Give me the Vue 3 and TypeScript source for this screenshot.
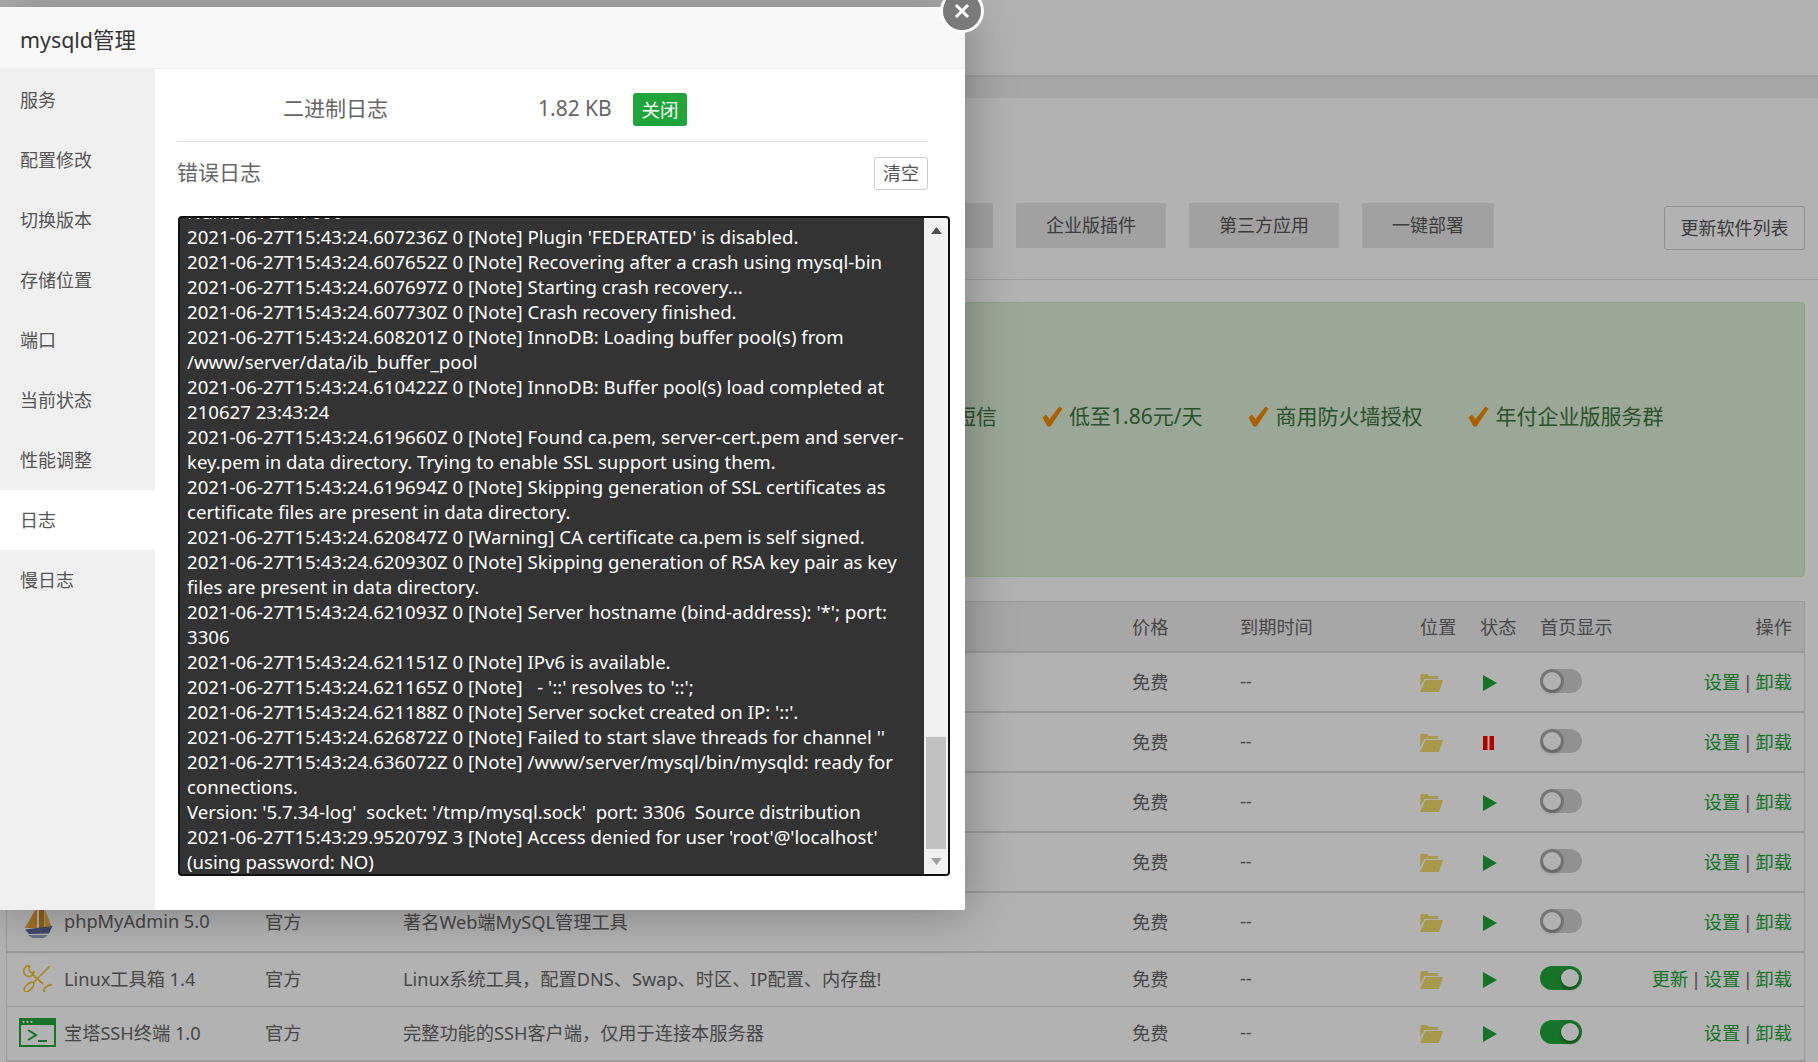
<script setup lang="ts">
interface Row {
  icon: string
  name: string
  type: string
  desc: string
  status: 'play' | 'pause'
  on: boolean
  update: boolean
  thin: boolean
}

const blank = { icon: '', name: '', type: '', desc: '', update: false, thin: false }
const rows: Row[] = [
  { ...blank, status: 'play', on: false },
  { ...blank, status: 'pause', on: false },
  { ...blank, status: 'play', on: false },
  { ...blank, status: 'play', on: false },
  { icon: 'boat', name: 'phpMyAdmin 5.0', type: '官方', desc: '著名Web端MySQL管理工具', status: 'play', on: false, update: false, thin: false },
  { icon: 'tools', name: 'Linux工具箱 1.4', type: '官方', desc: 'Linux系统工具，配置DNS、Swap、时区、IP配置、内存盘!', status: 'play', on: true, update: true, thin: true },
  { icon: 'ssh', name: '宝塔SSH终端 1.0', type: '官方', desc: '完整功能的SSH客户端，仅用于连接本服务器', status: 'play', on: true, update: false, thin: true }
]

const menu = ['服务', '配置修改', '切换版本', '存储位置', '端口', '当前状态', '性能调整', '日志', '慢日志']
const features = ['低至1.86元/天', '商用防火墙授权', '年付企业版服务群']

const logLines = [
  'Number: 2. 17000',
  "2021-06-27T15:43:24.607236Z 0 [Note] Plugin 'FEDERATED' is disabled.",
  '2021-06-27T15:43:24.607652Z 0 [Note] Recovering after a crash using mysql-bin',
  '2021-06-27T15:43:24.607697Z 0 [Note] Starting crash recovery...',
  '2021-06-27T15:43:24.607730Z 0 [Note] Crash recovery finished.',
  '2021-06-27T15:43:24.608201Z 0 [Note] InnoDB: Loading buffer pool(s) from',
  '/www/server/data/ib_buffer_pool',
  '2021-06-27T15:43:24.610422Z 0 [Note] InnoDB: Buffer pool(s) load completed at',
  '210627 23:43:24',
  '2021-06-27T15:43:24.619660Z 0 [Note] Found ca.pem, server-cert.pem and server-',
  'key.pem in data directory. Trying to enable SSL support using them.',
  '2021-06-27T15:43:24.619694Z 0 [Note] Skipping generation of SSL certificates as',
  'certificate files are present in data directory.',
  '2021-06-27T15:43:24.620847Z 0 [Warning] CA certificate ca.pem is self signed.',
  '2021-06-27T15:43:24.620930Z 0 [Note] Skipping generation of RSA key pair as key',
  'files are present in data directory.',
  "2021-06-27T15:43:24.621093Z 0 [Note] Server hostname (bind-address): '*'; port:",
  '3306',
  '2021-06-27T15:43:24.621151Z 0 [Note] IPv6 is available.',
  "2021-06-27T15:43:24.621165Z 0 [Note]   - '::' resolves to '::';",
  "2021-06-27T15:43:24.621188Z 0 [Note] Server socket created on IP: '::'.",
  "2021-06-27T15:43:24.626872Z 0 [Note] Failed to start slave threads for channel ''",
  '2021-06-27T15:43:24.636072Z 0 [Note] /www/server/mysql/bin/mysqld: ready for',
  'connections.',
  "Version: '5.7.34-log'  socket: '/tmp/mysql.sock'  port: 3306  Source distribution",
  "2021-06-27T15:43:29.952079Z 3 [Note] Access denied for user 'root'@'localhost'",
  '(using password: NO)'
]
</script>

<template>
  <div class="page">
    <div class="topbar"></div>
    <div class="panel">
      <div class="tabs">
        <div class="tab"></div>
        <div class="tab">企业版插件</div>
        <div class="tab">第三方应用</div>
        <div class="tab narrow">一键部署</div>
        <div class="update">更新软件列表</div>
      </div>
      <div class="rule"></div>
      <div class="promo">
        <span class="promo-lead">短信</span>
        <span v-for="f in features" :key="f" class="feature">
          <svg class="check" viewBox="0 0 21 21"><path d="M0.5 11.5 L4 8.5 L7.5 13 L17.5 0.5 L20.5 2.5 L8.5 20.5 L5.5 20.5 Z" /></svg>
          {{ f }}
        </span>
      </div>
      <div class="table">
        <div class="row head">
          <span></span><span></span><span></span><span></span>
          <span>价格</span><span>到期时间</span><span>位置</span><span>状态</span><span>首页显示</span>
          <span class="ops">操作</span>
        </div>
        <div v-for="(r, i) in rows" :key="i" class="row" :class="{ thin: r.thin }">
          <span class="icon-cell">
            <svg v-if="r.icon === 'boat'" class="boat" viewBox="0 0 28 33">
              <path d="M12 2 L12 23 L0 23 Z" fill="#eda32e" />
              <path d="M14 3 L14 23 L19 23 L19 2 Z" fill="#c98a2a" />
              <path d="M19.5 3 L27 23 L19.5 23 Z" fill="#f3b446" />
              <path d="M0 24.5 L27.5 21 L24 28.5 L4 29 Z" fill="#5d6596" />
              <path d="M3 30 H23 L19 33 H7 Z" fill="#9aa0c4" />
            </svg>
            <svg v-else-if="r.icon === 'tools'" class="tools" viewBox="0 0 29 27" fill="none" stroke="#f0c62e" stroke-width="1.7">
              <path d="M6.5 1 A5.2 5.2 0 1 0 11 7 L8 7.5 L6 5 Z" />
              <path d="M9 9 L20 19" />
              <path d="M27.5 19.5 A5.2 5.2 0 1 1 21 26 L21.5 23 L24.5 21 Z" />
              <path d="M27 1 L10 18" />
              <ellipse cx="6" cy="22" rx="6" ry="3" transform="rotate(-45 6 22)" />
            </svg>
            <svg v-else-if="r.icon === 'ssh'" class="ssh" viewBox="0 0 37 29">
              <rect x="1" y="1" width="35" height="27" fill="none" stroke="#20a53a" stroke-width="2" />
              <rect x="1" y="1" width="35" height="6" fill="#20a53a" />
              <circle cx="4.5" cy="3.8" r="1.1" fill="#fff" />
              <circle cx="8.5" cy="3.8" r="1.1" fill="#fff" />
              <circle cx="12.5" cy="3.8" r="1.1" fill="#fff" />
              <path d="M9 12 L17 17 L9 22" fill="none" stroke="#20a53a" stroke-width="2" />
              <path d="M19 23 H28" stroke="#20a53a" stroke-width="2" />
            </svg>
          </span>
          <span>{{ r.name }}</span>
          <span>{{ r.type }}</span>
          <span>{{ r.desc }}</span>
          <span>免费</span>
          <span>--</span>
          <span>
            <svg class="folder" viewBox="0 0 24 18">
              <path d="M1.5 1 Q1.5 0 2.5 0 H8 L10 2 H19 V5 H5.5 L1 13 Z" />
              <path d="M6.5 6 H24 L20 18 H1 Z" />
            </svg>
          </span>
          <span>
            <svg v-if="r.status === 'play'" class="play" viewBox="0 0 14 16"><path d="M0 0 L14 8 L0 16 Z" /></svg>
            <svg v-else class="pause" viewBox="0 0 11 14"><path d="M0 0 H4.5 V14 H0 Z M6.5 0 H11 V14 H6.5 Z" /></svg>
          </span>
          <span><i class="switch" :class="{ on: r.on }"></i></span>
          <span class="ops">
            <template v-if="r.update"><a>更新</a> | </template><a>设置</a> | <a>卸载</a>
          </span>
        </div>
      </div>
    </div>

    <div class="shade"></div>

    <div class="modal">
      <div class="modal-title">mysqld管理</div>
      <div class="modal-body">
        <ul class="side">
          <li v-for="m in menu" :key="m" :class="{ active: m === '日志' }">{{ m }}</li>
        </ul>
        <div class="content">
          <div class="binlog">
            <span class="bin-name">二进制日志</span>
            <span class="bin-size">1.82 KB</span>
            <span class="bin-btn">关闭</span>
          </div>
          <div class="errhead">
            <span class="err-title">错误日志</span>
            <span class="clear">清空</span>
          </div>
          <div class="logbox">
            <div class="logtext">
              <div v-for="(l, i) in logLines" :key="i" class="logline">{{ l }}</div>
            </div>
            <div class="sbar">
              <svg class="arrow" viewBox="0 0 11 7"><path d="M5.5 0 L11 7 H0 Z" /></svg>
              <div class="track"><div class="thumb"></div></div>
              <svg class="arrow down" viewBox="0 0 11 7"><path d="M0 0 H11 L5.5 7 Z" /></svg>
            </div>
          </div>
        </div>
      </div>
      <div class="closer">
        <svg viewBox="0 0 16 16"><path d="M2 2 L14 14 M14 2 L2 14" /></svg>
      </div>
    </div>
  </div>
</template>

<style>
html, body { margin: 0; padding: 0; }
</style>

<style scoped>
.page {
  position: relative;
  width: 1818px;
  height: 1062px;
  overflow: hidden;
  background: #f0f0f0;
  font-family: "Noto Sans", "Noto Sans CJK SC", sans-serif;
  font-size: 18px;
  color: #666;
}
.topbar {
  height: 75px;
  background: #fff;
  border-bottom: 2px solid #e4e4e4;
}
.panel {
  margin-top: 21px;
  background: #fff;
  height: 964px;
  padding: 105px 13px 0 6px;
  box-sizing: border-box;
}
.tabs {
  display: flex;
  gap: 23px;
  padding-left: 837px;
  height: 45px;
}
.tab {
  width: 150px;
  height: 45px;
  line-height: 45px;
  background: #e7e7e7;
  text-align: center;
  color: #555;
}
.tab.narrow { width: 132px; }
.update {
  margin-left: auto;
  margin-top: 3px;
  width: 139px;
  height: 42px;
  line-height: 42px;
  border: 1px solid #ccc;
  border-radius: 3px;
  text-align: center;
  color: #555;
}
.rule {
  height: 1px;
  background: #e0e0e0;
  margin: 31px -13px 0 -6px;
}
.promo {
  margin-top: 22px;
  height: 275px;
  box-sizing: border-box;
  padding: 98px 0 0 948px;
  background: #dff0d8;
  border: 1px solid #d6e9c6;
  border-radius: 4px;
  display: flex;
  gap: 46px;
  align-items: flex-start;
  color: #3c763d;
  font-size: 21px;
  line-height: 30px;
}
.promo-lead { width: 41px; white-space: nowrap; }
.feature { display: flex; align-items: center; gap: 6px; white-space: nowrap; }
.check { width: 21px; height: 21px; fill: #f28c00; }
.table {
  margin-top: 24px;
  border: 1px solid #ddd;
  border-bottom-width: 2px;
  font-size: 18.2px;
}
.row {
  display: grid;
  grid-template-columns: 57px 201px 138px 729px 108px 180px 60px 60px 120px minmax(0, 1fr);
  align-items: center;
  height: 60px;
  padding-bottom: 2px;
  box-sizing: border-box;
  border-bottom: 2px solid #dcdcdc;
  white-space: nowrap;
}
.row.head {
  height: 51px;
  background: #f0f0f0;
}
.row.thin {
  height: 53.5px;
  padding-bottom: 2px;
  border-bottom-width: 1px;
}
.row.thin:last-child { border-bottom: 0; }
.ops { justify-self: end; padding-right: 12px; word-spacing: -2px; }
.ops a { color: #20a53a; }
.icon-cell { display: flex; align-items: center; height: 100%; position: relative; }
.boat { width: 28px; height: 33px; margin-left: 18px; }
.tools { width: 29px; height: 27px; margin-left: 16px; }
.ssh { width: 37px; height: 29px; margin-left: 12px; }
.folder { display: block; width: 24px; height: 18px; fill: #f1da6e; margin: 4px 0 0 -1px; }
.play { display: block; width: 14px; height: 16px; fill: #20a53a; margin: 4px 0 0 3px; }
.pause { display: block; width: 11px; height: 14px; fill: #f00; margin: 4px 0 0 3px; }
.switch {
  display: block;
  position: relative;
  width: 42px;
  height: 24px;
  border-radius: 12px;
  background: #d0d0d0;
}
.switch::after {
  content: "";
  position: absolute;
  left: 3px;
  top: 3px;
  width: 18px;
  height: 18px;
  border-radius: 50%;
  background: #fff;
  box-shadow: 0 0 0 3px rgba(0, 0, 0, .18), 0 4px 4px rgba(0, 0, 0, .14);
}
.switch.on { background: #20a53a; }
.switch.on::after { left: 21px; box-shadow: 0 0 0 1px rgba(0, 0, 0, .1), 0 3px 3px rgba(0, 0, 0, .25); }

.shade {
  position: absolute;
  inset: 0;
  background: rgba(0, 0, 0, .3);
}
.modal {
  position: absolute;
  left: 0;
  top: 7px;
  width: 965px;
  height: 903px;
  background: #fff;
  border-radius: 2px;
  box-shadow: 1px 1px 50px rgba(0, 0, 0, .3);
  display: flex;
  flex-direction: column;
}
.modal-title {
  height: 62px;
  line-height: 66px;
  box-sizing: border-box;
  padding-left: 20px;
  background: #f8f8f8;
  border-bottom: 1px solid #eee;
  font-size: 21.4px;
  color: #333;
}
.modal-body { flex: 1; display: flex; min-height: 0; }
.side {
  list-style: none;
  margin: 0;
  padding: 1px 0 0;
  width: 155px;
  background: #f0f0f0;
}
.side li {
  height: 60px;
  line-height: 61px;
  padding-left: 20px;
  color: #555;
}
.side li.active { background: #fff; color: #555; }
.content {
  flex: 1;
  min-width: 0;
  padding: 0 37px 0 22px;
}
.binlog {
  display: flex;
  align-items: center;
  height: 73px;
  padding: 7px 0 0 106px;
  box-sizing: border-box;
  border-bottom: 1px solid #ddd;
  font-size: 21px;
}
.bin-name { width: 255px; margin-top: -4px; white-space: nowrap; }
.bin-size { width: 95px; margin-top: -2px; white-space: nowrap; }
.bin-btn {
  width: 54px;
  height: 33px;
  line-height: 33px;
  margin-top: 2px;
  border-radius: 3px;
  background: #20a53a;
  color: #fff;
  text-align: center;
  font-size: 18.5px;
}
.errhead {
  display: flex;
  justify-content: space-between;
  align-items: center;
  height: 63px;
  margin-bottom: 11px;
  font-size: 21px;
  color: #666;
}
.err-title { margin-top: -5px; }
.clear {
  box-sizing: border-box;
  width: 54px;
  height: 33px;
  line-height: 31px;
  margin-top: -1px;
  border: 1px solid #ccc;
  border-radius: 3px;
  text-align: center;
  font-size: 18px;
  color: #555;
}
.logbox {
  box-sizing: border-box;
  display: flex;
  width: 772px;
  height: 660px;
  margin-left: 1px;
  border: 2px solid #111;
  border-radius: 4px;
  background: #333;
  overflow: hidden;
}
.logtext {
  flex: 1;
  min-width: 0;
  padding: 0 0 0 7px;
  display: flex;
  flex-direction: column;
  justify-content: flex-end;
  color: #fff;
  font-size: 18.6px;
  overflow: hidden;
}
.logline {
  flex: none;
  height: 25px;
  line-height: 25px;
  white-space: pre;
}
.sbar {
  flex: none;
  width: 24px;
  background: #f1f1f1;
  display: flex;
  flex-direction: column;
  align-items: center;
}
.arrow { flex: none; width: 11px; height: 7px; fill: #505050; margin: 9px 0; }
.arrow.down { fill: #a3a3a3; }
.track { flex: 1; width: 100%; position: relative; }
.thumb {
  position: absolute;
  left: 2px;
  right: 2px;
  bottom: 0;
  height: 112px;
  background: #c1c1c1;
}
.closer {
  position: absolute;
  left: 940px;
  top: -18px;
  width: 44px;
  height: 44px;
  box-sizing: border-box;
  border: 3px solid #fff;
  border-radius: 50%;
  background: #7a7a7a;
  display: flex;
  align-items: center;
  justify-content: center;
}
.closer svg { width: 16px; height: 16px; fill: none; stroke: #fff; stroke-width: 3; }
</style>
